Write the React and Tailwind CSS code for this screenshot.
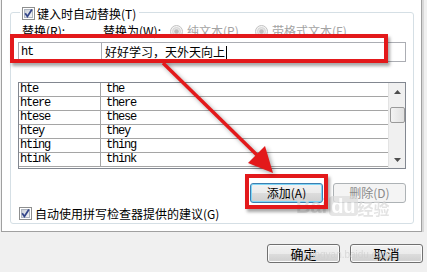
import React from 'react';

const rows = [
  ['hte', 'the'],
  ['htere', 'there'],
  ['htese', 'these'],
  ['htey', 'they'],
  ['hting', 'thing'],
  ['htink', 'think'],
];

const cjk = { fontFamily: '"Noto Sans CJK SC", "Liberation Sans", sans-serif' };
const mono = { fontFamily: '"Liberation Mono", "Noto Sans CJK SC", monospace' };

function CheckBox() {
  return (
    <svg width="13" height="13" viewBox="0 0 13 13" className="shrink-0">
      <defs>
        <linearGradient id="cbfill" x1="0" y1="0" x2="1" y2="1">
          <stop offset="0" stopColor="#c9ced6" />
          <stop offset="1" stopColor="#f7f8f9" />
        </linearGradient>
      </defs>
      <rect x="0.5" y="0.5" width="12" height="12" fill="#fff" stroke="#8e8f8f" />
      <rect x="2.5" y="2.5" width="8" height="8" fill="url(#cbfill)" stroke="#aeb5c0" />
      <path d="M3.2 6.3 L5.4 9.4 L9.9 2.6" fill="none" stroke="#34468a" strokeWidth="1.8" />
    </svg>
  );
}

function Radio() {
  return (
    <svg width="13" height="13" viewBox="0 0 13 13" className="shrink-0">
      <circle cx="6.5" cy="6.5" r="6" fill="#f4f4f4" stroke="#c2c2c2" />
      <circle cx="6.5" cy="6.5" r="4" fill="#e6e6e6" stroke="#d6d6d6" />
      <circle cx="6.5" cy="6.5" r="2.2" fill="#bdbdbd" />
    </svg>
  );
}

function Arrow({ up }) {
  return (
    <svg width="7" height="4" viewBox="0 0 7 4">
      <path d={up ? 'M0 4 L3.5 0 L7 4 Z' : 'M0 0 L3.5 4 L7 0 Z'} fill="#4d4d4d" />
    </svg>
  );
}

function Button({ children, variant }) {
  if (variant === 'disabled') {
    return (
      <div className="w-[73px] h-[20px] flex items-center justify-center rounded-[3px] border border-[#adb2b5] bg-[#f4f4f4] text-[12px] leading-none text-[#8a8a8a]" style={cjk}>
        {children}
      </div>
    );
  }
  const focus = variant === 'focus';
  return (
    <div
      className={
        focus
          ? 'w-[73px] h-[20px] flex items-center justify-center rounded-[3px] border border-[#3c7fb1] bg-[linear-gradient(#f2f2f2_0%,#ebebeb_50%,#dddddd_50%,#cfcfcf_100%)] shadow-[inset_0_0_0_1px_#7fd6f7] text-[12px] leading-none text-black'
          : 'w-[73px] h-[19px] flex items-center justify-center rounded-[3px] border border-[#707070] bg-[linear-gradient(#f2f2f2_0%,#ebebeb_50%,#dddddd_50%,#cfcfcf_100%)] shadow-[inset_0_0_0_1px_#fbfbfb] text-[13px] leading-none text-black'
      }
      style={cjk}
    >
      {children}
    </div>
  );
}

export default function App() {
  return (
    <div className="relative w-[427px] h-[272px] bg-[#f0f0f0] overflow-hidden text-black" style={cjk}>
      {/* tab page */}
      <div className="ml-[1px] w-[421px] h-[232px] bg-white border-l border-r border-b border-[#a0a0a0] pt-[12px] pl-[8px] shadow-[2px_0_0_#d8d8d8]">
        <div className="relative w-[404px] h-[212px] border border-[#d5dfe5] rounded-[3px] flex flex-col">
          {/* legend */}
          <div className="absolute -top-[6px] left-[9px] flex items-center gap-[2px] bg-white pl-[2px] pr-[3px] h-[13px]">
            <CheckBox />
            <span className="text-[12px] leading-[13px]">键入时自动替换(T)</span>
          </div>

          {/* labels */}
          <div className="mt-[11px] ml-[11px] h-[14px] flex items-center text-[12px] leading-[14px]">
            <span className="w-[81px]">替换(R):</span>
            <span className="w-[67px]">替换为(W):</span>
            <span className="w-[85px] flex items-center gap-[4px] text-[#a3a3a3]">
              <Radio />
              纯文本(P)
            </span>
            <span className="flex items-center gap-[4px] text-[#a3a3a3]">
              <Radio />
              带格式文本(F)
            </span>
          </div>

          {/* inputs */}
          <div className="mt-[4px] ml-[7px] w-[388px] h-[20px] flex border border-[#abadb3]">
            <div className="w-[83px] border-r border-[#abadb3] pl-[2px] flex items-center text-[12px] tracking-[-1.2px]" style={mono}>ht</div>
            <div className="flex-1 pl-[3px] flex items-center text-[12px]">
              好好学习，天外天向上
              <span className="ml-[1px] w-[1px] h-[13px] bg-black" />
            </div>
          </div>

          {/* list */}
          <div className="mt-[20px] ml-[7px] w-[388px] h-[87px] border border-[#828790] flex">
            <div className="flex-1">
              {rows.map(([a, b]) => (
                <div key={a} className="h-[14px] flex border-b border-[#a5a5a5] text-[12px] leading-[13px] tracking-[-1.2px]" style={mono}>
                  <div className="w-[82px] border-r border-[#a5a5a5] pl-[1px]">{a}</div>
                  <div className="pl-[5px]">{b}</div>
                </div>
              ))}
            </div>
            <div className="w-[17px] bg-[#f0f0f0] border-l border-[#e3e3e3] flex flex-col items-center">
              <div className="h-[17px] flex items-center justify-center"><Arrow up /></div>
              <div className="mt-[7px] w-[15px] h-[16px] rounded-[2px] border border-[#9a9a9a] bg-[linear-gradient(90deg,#f3f3f3,#e0e0e0)]" />
              <div className="flex-1" />
              <div className="h-[17px] flex items-center justify-center"><Arrow /></div>
            </div>
          </div>

          {/* add / delete */}
          <div className="mt-[14px] ml-[239px] flex gap-[10px]">
            <Button variant="focus">添加(A)</Button>
            <Button variant="disabled">删除(D)</Button>
          </div>

          {/* spell check */}
          <div className="mt-[4px] ml-[8px] flex items-center gap-[3px] text-[12px] leading-[13px]">
            <CheckBox />
            <span>自动使用拼写检查器提供的建议(G)</span>
          </div>
        </div>
      </div>

      {/* dialog buttons */}
      <div className="mt-[12px] ml-[267px] flex gap-[10px]">
        <Button>确定</Button>
        <Button>取消</Button>
      </div>

      {/* watermark */}
      <div className="absolute left-[296px] top-[196px] flex items-end text-[20px] font-bold leading-none text-[#d8d8d8] opacity-70" style={{ fontFamily: '"Liberation Sans", "Noto Sans CJK SC", sans-serif' }}>
        <span>Bai</span>
        <span className="ml-[2px] px-[2px] rounded-[4px] bg-[#dcdcdc] text-white">du</span>
        <span className="text-[16px]" style={cjk}>经验</span>
      </div>
      <div className="absolute left-[310px] top-[250px] text-[10px] leading-none text-[#cfcfcf] opacity-70" style={{ fontFamily: '"Liberation Sans", sans-serif' }}>
        jingyan.baidu.com
      </div>

      {/* red annotations */}
      <div className="absolute left-[10px] top-[34px] w-[378px] h-[29px] border-4 border-[#e3191b] shadow-[2px_3px_3px_rgba(0,0,0,0.35)]" />
      <div className="absolute left-[245px] top-[174px] w-[83px] h-[35px] border-4 border-[#e3191b] shadow-[2px_3px_3px_rgba(0,0,0,0.35)]" />
      <svg className="absolute inset-0 pointer-events-none drop-shadow-[2px_2px_2px_rgba(0,0,0,0.35)]" width="427" height="272" viewBox="0 0 427 272">
        <line x1="163" y1="63" x2="259" y2="157" stroke="#e3191b" strokeWidth="3.5" />
        <polygon points="248,163 265,146 273,173" fill="#e3191b" />
      </svg>
    </div>
  );
}
